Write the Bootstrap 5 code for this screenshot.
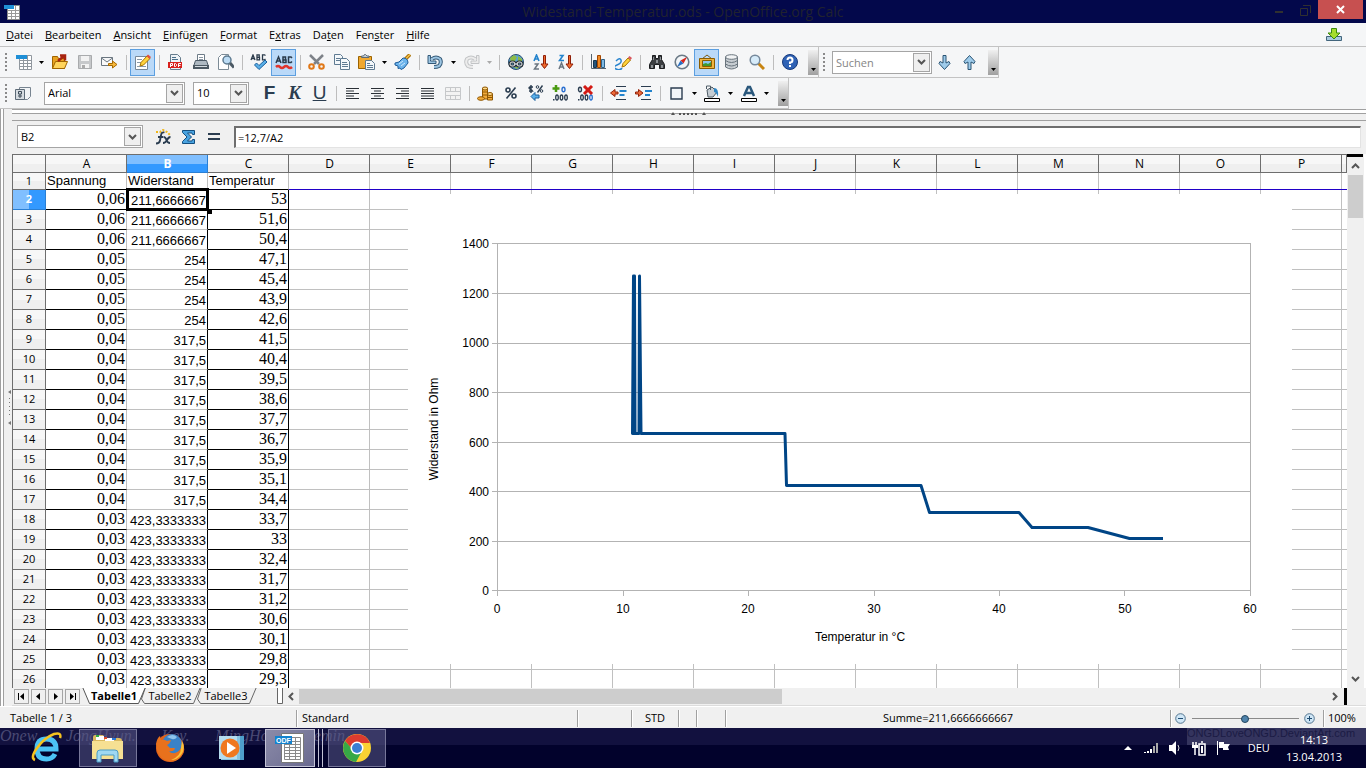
<!DOCTYPE html>
<html lang="de">
<head>
<meta charset="utf-8">
<meta name="viewport" content="width=device-width, initial-scale=1">
<title>Widestand-Temperatur.ods - OpenOffice.org Calc</title>
<link rel="stylesheet" href="https://cdn.jsdelivr.net/npm/bootstrap@5.3.0/dist/css/bootstrap.min.css">
<style>
:root{--ui:"Open Sans","Noto Sans",sans-serif;--face:#f0f0f0;--bar:#f5f6f7;--rule:#c3c3c3;--edge:#6e6e6e;--grid:#c0c0c0}
body{font:11px/16px var(--ui);color:#000;height:100vh;overflow:hidden;background:var(--face)}
button,select,input{font:inherit;color:inherit;border-radius:0}
button{border:0;background:none;padding:0}
.title-bar{height:23px;background:#03084b;color:#20222f}
.title-bar h1{font:14px/23px var(--ui);margin:0}
.win-btn{width:26px;height:20px;display:grid;place-items:center}
.win-close{width:45px;background:#c75050;height:19px;margin-right:3px}
.menu-bar{height:24px;background:var(--bar);border-bottom:1px solid var(--rule);padding-left:6px;gap:12px}
.menu-bar a{color:#000;text-decoration:none;line-height:23px}
.tool-row{height:31px;background:var(--bar)}
.tool-group{height:31px;border-bottom:1px solid var(--rule);border-right:1px solid var(--rule)}
.grip{width:2px;height:18px;margin:0 4px 0 5px;background:repeating-linear-gradient(#8a8a8a 0 2px,transparent 2px 4px)}
.grip-find{margin:0 7px 0 4px}
.ico{width:25px;height:27px;display:grid;place-items:center;flex:none}
.ico svg,.drop svg{display:block}
.ico.on{background:#bad9f8;border:1px solid #5c9fe0}
.drop{width:11px;height:27px;display:grid;place-items:center;flex:none}
.sep{width:8px;flex:none;display:grid;place-items:center}
.sep::before{content:"";width:1px;height:15px;background:#bdbdbd}
.more{width:10px;height:25px;background:linear-gradient(#f0f0f0,#a0a0a0);display:grid;place-items:end center;padding-bottom:4px;margin-left:6px}
.combo{position:relative;border:1px solid #a5a5a5;background:#fff;height:23px}
.combo select,.combo input{appearance:none;border:0;background:none;width:100%;height:21px;padding:0 20px 0 3px;outline:0;display:block}
.combo input::placeholder{color:#858585;opacity:1}
.combo .arrow{position:absolute;right:1px;top:1px;bottom:1px;width:17px;border:1px solid #a5a5a5;background:#efefef;display:grid;place-items:center;pointer-events:none}
.size-font{width:141px}.size-pt{width:56px}.size-find{width:100px}.size-name{width:126px}
.glyph{font:bold 19px/24px "Liberation Sans",sans-serif;color:#2b3d50}
.glyph-k{font-family:"Liberation Serif",serif;font-style:italic}
.side-split{width:12px;border-left:1px solid #a0a0a0;flex:none}
.side-split span{width:3px;height:100%;border-right:1px solid #a0a0a0;background:#fff}
.top-split{height:12px;border-top:1px solid #a0a0a0;border-bottom:1px solid #a0a0a0;box-shadow:inset 0 3px #fff,inset 0 4px #a0a0a0}
.formula-row{height:33px;padding:0 5px 1px 5px}
.formula-row input{border:1px solid #e3e3e3;border-top:2px solid #6e6e6e;border-left:2px solid #6e6e6e;height:22px;padding:0 2px;background:#fff;min-width:0}
.sheet-pane{border-top:1px solid var(--edge);border-left:1px solid var(--edge);background:#fff;min-width:0}
.cells{table-layout:fixed;border-collapse:separate;border-spacing:0;width:100%}
.cells .c-row{width:33px}.cells .c-col{width:81px}
.cells th{font-weight:400;text-align:center;padding:0;border:0 solid var(--edge);border-width:0 1px 1px 0;background:linear-gradient(#f7f7f7 50%,#efefef 50%)}
.cells thead th{height:18px;font-size:12px;line-height:16px;padding:1px 0 0 1px}
.cells td{padding:0 1px 0 1px;border:0 solid var(--grid);border-width:0 1px 1px 0;height:20px;text-align:right;white-space:nowrap;line-height:16px}
.cells tbody th{line-height:16px;height:20px}
.cells thead th.sel{background:linear-gradient(#80bfff 50%,#3399ff 50%);color:#fff;font-weight:700;border-color:#2a7fd4}
.cells tbody th.sel{background:linear-gradient(90deg,#80bfff 50%,#3399ff 50%);color:#fff;font-weight:700;border-color:#2a7fd4}
.cells td:nth-child(2),.cells td:nth-child(4){font:16px/16px "Liberation Serif",serif;border-bottom-color:#000}
.cells td:nth-child(3){font:13px/16px "Liberation Sans",sans-serif;vertical-align:bottom;border-right-color:#000}
.cells td:nth-child(4){border-right-color:#000}
.cells td:nth-child(5){background:repeating-linear-gradient(90deg,transparent 0 80px,var(--grid) 80px 81px);border-right:0}
.cells .head-row td{font:13px/16px "Liberation Sans",sans-serif;height:17px;text-align:left;vertical-align:middle;border-right-color:var(--grid)}
.cells .head-row td:nth-child(5){border-bottom-color:#2000c8}
.cells .head-row th{height:17px}
.cells td.cursor{position:relative}
.cursor::before{content:"";position:absolute;inset:-2px -2px -2px -1px;border:3px solid #000}
.cursor::after{content:"";position:absolute;right:-5px;bottom:-5px;width:5px;height:5px;background:#000}
.chart-object{position:absolute;left:395px;top:39px;width:884px;height:470px;background:#fff}
.chart-object text{font:12px "Liberation Sans",sans-serif}
.v-scroll{width:19px;border-right:2px solid #fff;background:var(--face);flex:none}
.v-scroll .cap{height:3px;background:#000;margin-right:1px}
.v-scroll button{height:18px;display:grid;place-items:center}
.v-scroll .thumb{height:43px;width:15px;background:#cdcdcd;margin-left:1px}
.tab-row{height:18px;border-bottom:1px solid #dcdcdc}
.nav-set{padding-left:2px}
.nav-btn{width:15px;height:15px;border:1px solid #a5a5a5;display:grid;place-items:center;margin-right:2px}
.sheet-tab{position:relative;height:16px;width:64px;margin-right:-8px}
.sheet-tab svg{position:absolute;inset:0}
.sheet-tab span{position:relative;line-height:16px}
.scroll-set{padding-left:27px}
.h-arrow{padding:0 5px}
.h-thumb{background:#cdcdcd;width:47%;height:15px}
.h-split{margin:0 19px 0 1px}
.status-row{height:22px;border-top:1px solid #fff;padding-top:2px}
.status-row>*{height:17px;line-height:16px}
.status-row>*+*{border-left:1px solid #a0a0a0;box-shadow:inset 1px 0 #fff}
.st-sheet{width:296px;padding-left:10px}.st-style{width:281px;padding-left:5px}.st-lang{width:54px}.st-mode{width:47px}.st-sel{width:18px}.st-mod{width:29px}.st-zoom{width:153px}.st-pct{width:43px;padding-left:4px}
.zoom-range{appearance:none;width:107px;height:14px;background:linear-gradient(#8a8a8a,#8a8a8a) center/100% 1px no-repeat;margin:0}
.zoom-range::-webkit-slider-thumb{appearance:none;width:8px;height:8px;border-radius:50%;background:#4f83ab;border:1px solid #23455f}
.task-bar{height:40px;color:#fff;background:linear-gradient(#12113f 0 17px,#02022c 17px)}
.task-bar .haze{position:absolute;top:0;height:17px;white-space:nowrap}
.haze-left{left:0;width:345px;font:italic 16px/16px "Liberation Serif",serif;color:#4a4a74}
.haze-right{right:0;width:179px;background:#34345e;font:11px/10px "Liberation Sans",sans-serif;color:#1b1b44}
.task-set{padding-left:17px;gap:4px}
.task-btn{width:58px;height:38px;display:grid;place-items:center}
.task-btn.open{background:rgba(90,90,135,.55);border:1px solid #77779a}
.task-btn.front{width:50px;background:linear-gradient(135deg,#8b8ba8,#6a6a90);border:1px solid #c3c3d6}
.stack{width:8px;height:38px;border-right:1px solid #c3c3d6;background:linear-gradient(90deg,transparent 3px,#c3c3d6 3px 4px,transparent 4px);margin:0 1px 0 -4px}
.tray-ico{width:24px;display:grid;place-items:center}
.tray-lang{margin:0 16px 0 12px}
.clock{line-height:17px}
</style>
</head>
<body class="d-flex flex-column">

<header>
  <div class="title-bar d-flex align-items-start">
    <div class="w-25 flex-fill"><svg class="d-block mt-1 ms-1" width="16" height="16" viewBox="0 0 16 16"><path fill="#fff" stroke="#8a8a8a" d="M3.500 1.500h12v14h-12z"/><path stroke="#999" d="M4 6.500h11M4 9.500h11M4 12.500h11M7.500 6v9M11.500 2v13"/><path fill="#1f8fd6" d="M0 1h10v4H0z"/></svg></div>
    <h1>Widestand-Temperatur.ods - OpenOffice.org Calc</h1>
    <div class="w-25 flex-fill d-flex justify-content-end">
      <button class="win-btn" aria-label="Minimieren"><svg width="8" height="12"><path fill="#303030" d="M0 7h8v2H0z"/></svg></button>
      <button class="win-btn" aria-label="Verkleinern"><svg width="11" height="11" fill="none" stroke="#303030"><path d="M.5 3.500h7v7h-7zM3 .5h7.500V8"/></svg></button>
      <button class="win-btn win-close" aria-label="Schließen"><svg width="9" height="9" stroke="#fff" stroke-width="2"><path d="M1 1l7 7M8 1L1 8"/></svg></button>
    </div>
  </div>
  <nav class="menu-bar d-flex">
    <a href="#"><u>D</u>atei</a><a href="#"><u>B</u>earbeiten</a><a href="#"><u>A</u>nsicht</a><a href="#"><u>E</u>infügen</a><a href="#"><u>F</u>ormat</a><a href="#">E<u>x</u>tras</a><a href="#">Da<u>t</u>en</a><a href="#">Fen<u>s</u>ter</a><a href="#"><u>H</u>ilfe</a>
    <button class="ms-auto me-4" aria-label="Aktualisierung"><svg class="d-block" width="16" height="16" viewBox="0 0 16 16"><path fill="#a9c9dd" stroke="#42657c" d="M.5 9.500h15v4H.5z"/><path fill="#a5dc2c" stroke="#3c8a0c" d="M5.500 1.500h5V6H14l-6 6-6-6h3.500z"/></svg></button>
  </nav>

  <div class="tool-row d-flex">
    <div class="tool-group d-flex align-items-center">
      <span class="grip"></span>
      <button class="ico" aria-label="Neu"><svg width="16" height="16"><path fill="#fff" stroke="#90979e" d="M3.500 1.500h12v14h-12zM3 6.500h12M3 9.500h12M3 12.500h12M7.500 2v13M11.500 2v13"/><path fill="#1f8fd6" d="M0 1h11v4H0z"/></svg></button>
      <button class="drop" aria-label="Mehr"><svg width="5" height="3"><path d="M0 0h5L2.500 3z"/></svg></button>
      <button class="ico" aria-label="Öffnen"><svg width="17" height="16"><path fill="#e8a220" stroke="#a06400" d="M1.500 14.500v-12h5l1 2h6v10z"/><path fill="#ffd45c" stroke="#a06400" d="M1.500 14.500l3-7h12l-3 7z"/><path fill="none" stroke="#a82310" stroke-width="2.500" d="M7 7l6-5M9 1.500h5v5"/></svg></button>
      <button class="ico" aria-label="Speichern"><svg width="14" height="14"><path fill="#c6c8ca" stroke="#a9abad" d="M.5.500h13v13H.500z"/><path fill="#f2f2f2" d="M3 1h8v5H3zM3 9h8v4H3z"/><path fill="#aaa" d="M4 10h3v3H4z"/></svg></button>
      <button class="ico" aria-label="E-Mail"><svg width="17" height="13"><path fill="#fafafa" stroke="#6a7680" d="M.5 1.500h11v8H.500zM.5 2l5.500 4L11.500 2"/><path fill="#f6b73a" stroke="#a86a00" d="M7.500 7.500h4V5l4.500 3.500L11.500 12v-2.500h-4z"/></svg></button>
      <span class="sep"></span>
      <button class="ico on" aria-label="Bearbeiten"><svg width="17" height="16"><path fill="#fff" stroke="#778899" d="M1.500 2.500h12v13h-12z"/><path stroke="#8899a8" d="M3 5.500h5M3 8.500h4M3 12.500h9"/><path fill="#ffd33d" stroke="#a87400" d="M6 12l1-3.500L13 2l3 2.500L9.500 11z"/><path fill="#e05040" d="M12.500 2L14 .5l3 2.500-1.500 2z"/></svg></button>
      <span class="sep"></span>
      <button class="ico" aria-label="PDF"><svg width="15" height="16"><path fill="#eef3f7" stroke="#667c8d" d="M2.500.5h7l3 3v12h-10z"/><path stroke="#4a6f8a" d="M4 3.500h4M4 5.500h6"/><path fill="#d8201c" d="M0 8h14v6H0z"/><path fill="none" stroke="#fff" d="M2.500 13V9.500h2v2h-2M6.500 9.500h1l1 1v1l-1 1h-1zM10.500 13V9.500h2.500M10.500 11.500h2"/></svg></button>
      <button class="ico" aria-label="Drucken"><svg width="16" height="16"><path fill="#fff" stroke="#6d7c88" d="M4.500 7V.5h7V7"/><path stroke="#8a97a3" d="M6 3.500h4M6 5.500h4"/><path fill="#aeb9c2" stroke="#4c5a66" d="M.5 12.500l2-6h11l2 6z"/><path fill="#4c5963" d="M0 11h16v4H0z"/><path fill="#d5dce1" d="M2 12h12v1H2z"/></svg></button>
      <button class="ico" aria-label="Seitenansicht"><svg width="16" height="16"><path fill="#fff" stroke="#7c8b96" d="M.5 3.500l3-3h7v15H.500z"/><circle cx="9" cy="6" r="4" fill="#bcdcf5" stroke="#5d7a90" stroke-width="1.500"/><path stroke="#4b5964" stroke-width="3" d="M12 9l4 4.500"/></svg></button>
      <span class="sep"></span>
      <button class="ico" aria-label="Rechtschreibung"><svg width="18" height="16"><g fill="none" stroke="#2a3a4a" stroke-width="1.300"><path d="M1 6l2-5 2 5M2 4.500h2.500M7 .8v5h2.500V3.300H7h2.200V.8zM15.500 1.500l-1-.7h-2v5h2l1-.7"/></g><path fill="#59b0e8" stroke="#1b5f9c" d="M4.500 11l2-2 2.500 2.500L15 6l2 2-8 7.500z"/></svg></button>
      <button class="ico on" aria-label="Automatische Rechtschreibprüfung"><svg width="18" height="16"><g fill="none" stroke="#2a3a4a" stroke-width="1.500"><path d="M1 9l2.500-6L6 9M2 7h3M8 3v5.500h3V6H8h2.500V3zM17 4l-1-1h-2.500v5.500H16l1-1"/></g><path fill="none" stroke="#e0342c" stroke-width="2.500" d="M1 13q2-2 4 0t4 0 4 0 4 0"/></svg></button>
      <span class="sep"></span>
      <button class="ico" aria-label="Ausschneiden"><svg width="17" height="16" fill="none"><path stroke="#7d8288" stroke-width="2.500" d="M2 1l9 9M15 1l-9 9"/><circle cx="3.500" cy="12.500" r="2.300" stroke="#e07818" stroke-width="2"/><circle cx="13.500" cy="12.500" r="2.300" stroke="#e07818" stroke-width="2"/></svg></button>
      <button class="ico" aria-label="Kopieren"><svg width="16" height="16" fill="#f4f8fb" stroke="#5f7b92"><path d="M.5.5h6l2 2v8h-8z"/><path d="M2 4.500h4M2 6.500h4"/><path d="M6.500 4.500h6l3 3v8h-9z"/><path d="M8 8.500h5M8 10.500h6M8 12.500h6"/></svg></button>
      <button class="ico" aria-label="Einfügen"><svg width="17" height="16"><path fill="#f0a830" stroke="#9b6300" d="M.5 2.500h13v12H.500z"/><path fill="#c3ccd3" stroke="#5d6b76" d="M3.500 3.500V2h2l1-1.500h1L9 2h2v1.500z"/><path fill="#f4f8fb" stroke="#5f7b92" d="M7.500 6.500h6l3 3v6h-9zM9 9.500h3M9 11.500h6M9 13.500h6"/></svg></button>
      <button class="drop" aria-label="Mehr"><svg width="5" height="3"><path d="M0 0h5L2.500 3z"/></svg></button>
      <button class="ico" aria-label="Format übertragen"><svg width="17" height="16"><path stroke="#a66c00" stroke-width="3.500" d="M11 5.500L16 .5"/><path stroke="#f6c14a" stroke-width="1.500" d="M11 5.500L16 .5"/><path fill="#6cb4ec" stroke="#1c5c9a" d="M1 9l4-1 4-4q5 0 5 5l-4 5-3 1.500L6 14l-2 .5V12l-3-1z"/><path stroke="#cfe8fb" d="M5 10l4-3M7 12l4-3"/></svg></button>
      <span class="sep"></span>
      <button class="ico" aria-label="Rückgängig"><svg width="17" height="16"><path fill="none" stroke="#355a78" stroke-width="4" d="M5 5q4-3 8 0 2 4-1 7-2 1-5 1"/><path fill="#9cc5e2" stroke="#355a78" d="M1 1.500h2.500V7H9v2.500H1z"/><path fill="none" stroke="#9cc5e2" stroke-width="2" d="M4 6l1-1q4-3 8 0 2 4-1 7-2 1-5 1"/></svg></button>
      <button class="drop" aria-label="Mehr"><svg width="5" height="3"><path d="M0 0h5L2.500 3z"/></svg></button>
      <button class="ico" aria-label="Wiederherstellen"><svg width="17" height="16"><path fill="none" stroke="#c2c4c6" stroke-width="4" d="M12 5q-4-3-8 0-2 4 1 7 2 1 5 1"/><path fill="#ececec" stroke="#c2c4c6" d="M16 1.500h-2.500V7H8v2.500h8z"/><path fill="none" stroke="#ececec" stroke-width="2" d="M13 6l-1-1q-4-3-8 0-2 4 1 7 2 1 5 1"/></svg></button>
      <button class="drop" aria-label="Mehr"><svg width="5" height="3"><path fill="#aaa" d="M0 0h5L2.500 3z"/></svg></button>
      <span class="sep"></span>
      <button class="ico" aria-label="Hyperlink"><svg width="16" height="16"><circle cx="8" cy="8" r="7.500" fill="#5ba4d6" stroke="#2a4e6d"/><path fill="#8dbb45" d="M2 4l4-3 3 2-2 4-4 1zM10 2l4 3v4l-4-2zM6 13h5l-2 2z"/><g fill="none" stroke="#2b3238" stroke-width="3"><rect x="2" y="8" width="5" height="4" rx="2"/><rect x="9" y="8" width="5" height="4" rx="2"/></g><g fill="none" stroke="#e8edf0"><rect x="2" y="8" width="5" height="4" rx="2"/><rect x="9" y="8" width="5" height="4" rx="2"/><path d="M6 10h4"/></g></svg></button>
      <button class="ico" aria-label="Aufsteigend sortieren"><svg width="16" height="16" fill="none"><path stroke="#2383cc" stroke-width="1.600" d="M1 7l2.500-6L6 7M2 5h3"/><path stroke="#6b7680" stroke-width="1.500" d="M1.500 10H5l-3.500 5H6"/><path fill="#f06a2c" stroke="#8e1f08" d="M10.500 1.500h2V10H15l-3.500 4.500L8 10h2.500z"/></svg></button>
      <button class="ico" aria-label="Absteigend sortieren"><svg width="16" height="16" fill="none"><path stroke="#2383cc" stroke-width="1.600" d="M1.500 1.500H5L1.500 6.500H6"/><path stroke="#6b7680" stroke-width="1.500" d="M1 15l2.500-6L6 15M2 13h3"/><path fill="#f06a2c" stroke="#8e1f08" d="M10.500 1.500h2V10H15l-3.500 4.500L8 10h2.500z"/></svg></button>
      <span class="sep"></span>
      <button class="ico" aria-label="Diagramm"><svg width="17" height="16"><path fill="#26567c" stroke="#173750" d="M3.500 6.500h3v7h-3z"/><path fill="#f08a24" stroke="#a34600" d="M7.500 1.500h3v12h-3z"/><path fill="#7fb9e2" stroke="#2d5f86" d="M11.500 5.500h3v8h-3z"/><path fill="none" stroke="#55636e" d="M1.500 0v14.500H16"/></svg></button>
      <button class="ico" aria-label="Zeichenfunktionen"><svg width="17" height="16"><path fill="none" stroke="#2b86cf" stroke-width="1.500" d="M1 7q4-4 5-1t-4 5-1 4 6-1"/><path fill="#ffd33d" stroke="#a87400" d="M7 13l1-3.500L13 4l2.500 2L10 12z"/><path fill="#d9575f" d="M13 3.500L14.500 2 17 4l-1.500 2z"/></svg></button>
      <span class="sep"></span>
      <button class="ico" aria-label="Suchen und Ersetzen"><svg width="16" height="16"><path fill="#3c3f42" stroke="#1b1d1f" d="M3.500 1.500h3v3h3v-3h3v4l3 5v4h-5v-4h-5v4h-5v-4l3-5z"/><path fill="#8d9296" d="M4 3h1v3H4zM11 3h1v3h-1zM2 11h2v3H2zM12 11h2v3h-2zM7 6h2v3H7z"/></svg></button>
      <button class="ico" aria-label="Navigator"><svg width="16" height="16"><circle cx="8" cy="8" r="6.800" fill="#f3f6f8" stroke="#6b7a86" stroke-width="1.600"/><path fill="#d9251c" d="M13 3L9.500 9.500l-3-3z"/><path fill="#2a6fc0" d="M3 13l3.500-6.500 3 3z"/></svg></button>
      <button class="ico on" aria-label="Gallery"><svg width="16" height="16"><path fill="none" stroke="#7a5a10" d="M3 5l5-4 5 4"/><path fill="#f0b440" stroke="#8b5d00" d="M.5 4.500h15v10H.500z"/><path fill="#8cc6f0" stroke="#8b5d00" d="M3.500 6.500h9v6h-9z"/><path fill="#3f9a30" d="M4 12v-2l3-1 2 1 3-2v4z"/></svg></button>
      <button class="ico" aria-label="Datenquellen"><svg width="13" height="16" fill="#c6ccd1" stroke="#69747d"><path d="M.5 3v10q6 4 12 0V3z"/><ellipse cx="6.500" cy="3" rx="6" ry="2.300" fill="#f1f3f4"/><path fill="none" d="M.5 6.500q6 4 12 0M.5 10q6 4 12 0"/></svg></button>
      <button class="ico" aria-label="Maßstab"><svg width="16" height="16"><path stroke="#c78412" stroke-width="3" d="M9.500 9.500L15 15"/><circle cx="6" cy="6" r="4.800" fill="#d6ebf9" stroke="#75889a" stroke-width="1.500"/></svg></button>
      <span class="sep"></span>
      <button class="ico" aria-label="Hilfe"><svg width="16" height="16"><circle cx="8" cy="8" r="7.500" fill="#2f62b5" stroke="#173a7c"/><path fill="none" stroke="#fff" stroke-width="2" d="M5.500 6q0-2.500 2.500-2.500T10.500 6 8 8.500V10M8 11v2"/></svg></button>
      <button class="more" aria-label="Weitere"><svg width="5" height="3"><path d="M0 0h5L2.500 3z"/></svg></button>
    </div>
    <div class="tool-group d-flex align-items-center">
      <span class="grip grip-find"></span>
      <label class="combo size-find"><input type="text" placeholder="Suchen" aria-label="Suchen"><span class="arrow"><svg width="9" height="6" fill="none" stroke="#555" stroke-width="2"><path d="M1 1l3.500 3.500L8 1"/></svg></span></label>
      <button class="ico" aria-label="Weitersuchen"><svg width="13" height="15"><path fill="#9ecbea" stroke="#2b5575" d="M5 .5h3V8l3-1.500 1 2-5.500 6L1 8.500l1-2L5 8z"/></svg></button>
      <button class="ico" aria-label="Rückwärts suchen"><svg width="13" height="15"><path fill="#9ecbea" stroke="#2b5575" d="M5 14.500h3V7l3 1.500 1-2L6.500.5 1 6.500l1 2L5 7z"/></svg></button>
      <button class="more" aria-label="Weitere"><svg width="5" height="3"><path d="M0 0h5L2.500 3z"/></svg></button>
    </div>
  </div>

  <div class="tool-row d-flex">
    <div class="tool-group d-flex align-items-center">
      <span class="grip"></span>
      <button class="ico" aria-label="Formatvorlagen"><svg width="17" height="15"><path fill="#f1f4f6" stroke="#788591" d="M4.500 1.500h11v9l-3 3h-8z"/><path fill="#d6dce1" stroke="#5d6b77" d="M.5 3.500h9v10H.500z"/><path fill="none" stroke="#3f4d59" d="M3.500 8V5.500h3V8h-3M5 8v4M3 10h4"/></svg></button>
      <label class="combo size-font ms-2"><select aria-label="Schriftart"><option>Arial</option></select><span class="arrow"><svg width="9" height="6" fill="none" stroke="#555" stroke-width="2"><path d="M1 1l3.500 3.500L8 1"/></svg></span></label>
      <label class="combo size-pt ms-2"><select aria-label="Schriftgröße"><option>10</option></select><span class="arrow"><svg width="9" height="6" fill="none" stroke="#555" stroke-width="2"><path d="M1 1l3.500 3.500L8 1"/></svg></span></label>
      <button class="ico glyph ms-2">F</button>
      <button class="ico glyph glyph-k">K</button>
      <button class="ico glyph fw-normal text-decoration-underline">U</button>
      <span class="sep"></span>
      <button class="ico" aria-label="Linksbündig"><svg width="13" height="11" stroke="#2a3036"><path d="M0 .5h13M0 3h8M0 5.500h13M0 8h8M0 10.500h13"/></svg></button>
      <button class="ico" aria-label="Zentriert"><svg width="13" height="11" stroke="#2a3036"><path d="M0 .5h13M3 3h7M0 5.500h13M3 8h7M0 10.500h13"/></svg></button>
      <button class="ico" aria-label="Rechtsbündig"><svg width="13" height="11" stroke="#2a3036"><path d="M0 .5h13M5 3h8M0 5.500h13M5 8h8M0 10.500h13"/></svg></button>
      <button class="ico" aria-label="Blocksatz"><svg width="13" height="11" stroke="#2a3036"><path d="M0 .5h13M0 3h13M0 5.500h13M0 8h13M0 10.500h13"/></svg></button>
      <button class="ico" aria-label="Zellen verbinden"><svg width="16" height="13" fill="#f3f3f3" stroke="#c6c8ca"><path d="M.5.5h15v12H.500zM0 4.500h16M0 8.500h16M5.500 0v4M10.500 0v4M5.500 9v4M10.500 9v4"/></svg></button>
      <span class="sep"></span>
      <button class="ico" aria-label="Währung"><svg width="17" height="15" fill="#f2ab3c" stroke="#8f5600"><path d="M5.500 2v11h5V2z"/><ellipse cx="8" cy="2.500" rx="2.500" ry="1.500" fill="#ffdc8c"/><path d="M10.500 8v6h5V8z"/><ellipse cx="13" cy="8" rx="2.500" ry="1.500" fill="#ffdc8c"/><path fill="none" d="M5.500 6h5M5.500 9h5M11 11.500h4.500"/><ellipse cx="4" cy="12.500" rx="3.500" ry="1.800"/></svg></button>
      <button class="ico" aria-label="Prozent"><svg width="12" height="12" fill="none" stroke="#2b3d50" stroke-width="1.600"><circle cx="3" cy="3" r="2"/><circle cx="9" cy="9" r="2"/><path d="M10.500.5l-9 11"/></svg></button>
      <button class="ico" aria-label="Standardformat"><svg width="17" height="16" fill="none" stroke="#2b3d50"><path stroke-width="1.400" d="M6 2H3q-2 1 0 2t2.500 2H2M4 0v8M15.500.5l-5 7"/><circle cx="10.500" cy="2" r="1.300"/><circle cx="14.500" cy="6" r="1.300"/><path fill="#5ab0ea" stroke="#1b5f9c" d="M4 11.500l4-4v2.500h4v3H8v2.500z"/></svg></button>
      <button class="ico" aria-label="Dezimalstelle hinzufügen"><svg width="17" height="16" fill="none"><path stroke="#4a9a10" stroke-width="2.500" d="M4 0v7M.5 3.500h7"/><ellipse cx="11.500" cy="4.500" rx="1.500" ry="2.300" stroke="#2a6fd0" stroke-width="1.400"/><g stroke="#2b3d50" stroke-width="1.300"><ellipse cx="5" cy="12.500" rx="1.300" ry="2.500"/><ellipse cx="9.500" cy="12.500" rx="1.300" ry="2.500"/><ellipse cx="14" cy="12.500" rx="1.300" ry="2.500"/></g><path fill="#2b3d50" d="M1 14h1.500v1.500H1z"/></svg></button>
      <button class="ico" aria-label="Dezimalstelle löschen"><svg width="17" height="16" fill="none"><ellipse cx="3" cy="4.500" rx="1.500" ry="2.300" stroke="#2b3d50" stroke-width="1.400"/><g stroke="#2b3d50" stroke-width="1.300"><ellipse cx="5" cy="12.500" rx="1.300" ry="2.500"/><ellipse cx="9.500" cy="12.500" rx="1.300" ry="2.500"/><ellipse cx="14" cy="12.500" rx="1.300" ry="2.500" stroke="#2a6fd0"/></g><path fill="#2b3d50" d="M1 14h1.500v1.500H1z"/><path stroke="#d31a14" stroke-width="3" d="M7 1l8 8M15 1L7 9"/></svg></button>
      <span class="sep"></span>
      <button class="ico" aria-label="Einzug vermindern"><svg width="17" height="14" fill="none"><path fill="#ee6a3a" stroke="#93230a" d="M.5 7L5 3.500V6h3v2H5v2.500z"/><path stroke="#2b3d50" d="M6 .5h10M6 13.500h10"/><path stroke="#2383cc" stroke-width="2" d="M9.500 5h7M9.500 9h5"/></svg></button>
      <button class="ico" aria-label="Einzug erhöhen"><svg width="17" height="14" fill="none"><path fill="#ee6a3a" stroke="#93230a" d="M8 7L3.500 3.500V6h-3v2h3v2.500z"/><path stroke="#2b3d50" d="M6 .5h10M6 13.500h10"/><path stroke="#2383cc" stroke-width="2" d="M10 5h7M10 9h5"/></svg></button>
      <span class="sep"></span>
      <button class="ico" aria-label="Umrandung"><svg width="13" height="13"><path fill="#f2f5f8" stroke="#2b3d50" stroke-width="1.400" d="M1 1h11v11H1z"/></svg></button>
      <button class="drop" aria-label="Mehr"><svg width="5" height="3"><path d="M0 0h5L2.500 3z"/></svg></button>
      <button class="ico" aria-label="Hintergrundfarbe"><svg width="17" height="17"><path fill="#c4ccd2" stroke="#4f5c67" d="M3 5l5-3 5 5-4 5H4z"/><path fill="none" stroke="#4f5c67" d="M2.500 4V1h4v4"/><path fill="#2f86c4" d="M10 3q5 0 4 9-2-5-4-5z"/><path fill="#fff" stroke="#000" d="M.5 13.500h15v3H.500z"/></svg></button>
      <button class="drop" aria-label="Mehr"><svg width="5" height="3"><path d="M0 0h5L2.500 3z"/></svg></button>
      <button class="ico" aria-label="Zeichenfarbe"><svg width="16" height="17"><path fill="none" stroke="#2a587c" stroke-width="2.500" d="M3 11l4-9h2l4 9M5 8h6"/><path fill="#fff" stroke="#000" d="M.5 13.500h15v3H.500z"/></svg></button>
      <button class="drop" aria-label="Mehr"><svg width="5" height="3"><path d="M0 0h5L2.500 3z"/></svg></button>
      <button class="more" aria-label="Weitere"><svg width="5" height="3"><path d="M0 0h5L2.500 3z"/></svg></button>
    </div>
  </div>
</header>

<main class="flex-fill d-flex overflow-hidden">
  <div class="side-split position-relative d-flex align-items-center">
    <span></span>
    <svg class="ms-1" width="4" height="36" fill="#777"><path d="M0 2l3-2v4zM0 33l3-2v4zM1 8h1v1H1zM1 12h1v1H1zM1 16h1v1H1zM1 20h1v1H1zM1 24h1v1H1z"/></svg>
  </div>
  <div class="flex-fill d-flex flex-column overflow-hidden">
    <div class="top-split d-flex justify-content-center align-items-end pb-1"><svg width="36" height="4" fill="#555"><path d="M0 3l2-3 2 3zM31 3l2-3 2 3zM8 1h2v2H8zM12 1h2v2h-2zM16 1h2v2h-2zM20 1h2v2h-2zM24 1h2v2h-2z"/></svg></div>
    <div class="formula-row d-flex align-items-center">
      <label class="combo size-name me-2"><select aria-label="Namensfeld"><option>B2</option></select><span class="arrow"><svg width="9" height="6" fill="none" stroke="#555" stroke-width="2"><path d="M1 1l3.500 3.500L8 1"/></svg></span></label>
      <button class="ico" aria-label="Funktions-Assistent"><svg width="17" height="16" fill="none"><path stroke="#f0b818" stroke-width="2" stroke-dasharray="2 1.500" d="M1 3h4l3-2 4 2 3 3"/><path stroke="#2b3d50" stroke-width="1.800" d="M9.500 3.500q-3-1-3.500 3l-1 5q-.5 3-4 3M3 8h5M8.500 8q2 0 3 3t3.500 3M15.500 8q-2 0-3.500 3t-4 3"/></svg></button>
      <button class="ico" aria-label="Summe"><svg width="14" height="14"><path fill="#49a3e0" stroke="#134f80" d="M.5.500h12v4h-2L10 3H5.500l4 4-4 4H10l.5-1.500h2v4H.500v-2L5 7 .5 2.500z"/></svg></button>
      <button class="ico" aria-label="Funktion"><svg width="12" height="7"><path fill="#2b3d50" d="M0 0h12v2H0zM0 5h12v2H0z"/></svg></button>
      <input class="flex-fill ms-2" type="text" value="=12,7/A2" aria-label="Eingabezeile">
    </div>
    <div class="flex-fill d-flex overflow-hidden">
      <div class="sheet-pane flex-fill position-relative overflow-hidden">
        <table class="cells">
          <colgroup><col class="c-row"><col class="c-col" span="15"><col class="c-col"><col></colgroup>
          <thead><tr><th></th><th>A</th><th class="sel">B</th><th>C</th><th>D</th><th>E</th><th>F</th><th>G</th><th>H</th><th>I</th><th>J</th><th>K</th><th>L</th><th>M</th><th>N</th><th>O</th><th>P</th><th></th></tr></thead>
          <tbody>
          <tr class="head-row"><th>1</th><td>Spannung</td><td>Widerstand</td><td>Temperatur</td><td colspan="14"></td></tr>
          <tr><th class="sel">2</th><td>0,06</td><td class="cursor">211,6666667</td><td>53</td><td colspan="14"></td></tr>
          <tr><th>3</th><td>0,06</td><td>211,6666667</td><td>51,6</td><td colspan="14"></td></tr>
          <tr><th>4</th><td>0,06</td><td>211,6666667</td><td>50,4</td><td colspan="14"></td></tr>
          <tr><th>5</th><td>0,05</td><td>254</td><td>47,1</td><td colspan="14"></td></tr>
          <tr><th>6</th><td>0,05</td><td>254</td><td>45,4</td><td colspan="14"></td></tr>
          <tr><th>7</th><td>0,05</td><td>254</td><td>43,9</td><td colspan="14"></td></tr>
          <tr><th>8</th><td>0,05</td><td>254</td><td>42,6</td><td colspan="14"></td></tr>
          <tr><th>9</th><td>0,04</td><td>317,5</td><td>41,5</td><td colspan="14"></td></tr>
          <tr><th>10</th><td>0,04</td><td>317,5</td><td>40,4</td><td colspan="14"></td></tr>
          <tr><th>11</th><td>0,04</td><td>317,5</td><td>39,5</td><td colspan="14"></td></tr>
          <tr><th>12</th><td>0,04</td><td>317,5</td><td>38,6</td><td colspan="14"></td></tr>
          <tr><th>13</th><td>0,04</td><td>317,5</td><td>37,7</td><td colspan="14"></td></tr>
          <tr><th>14</th><td>0,04</td><td>317,5</td><td>36,7</td><td colspan="14"></td></tr>
          <tr><th>15</th><td>0,04</td><td>317,5</td><td>35,9</td><td colspan="14"></td></tr>
          <tr><th>16</th><td>0,04</td><td>317,5</td><td>35,1</td><td colspan="14"></td></tr>
          <tr><th>17</th><td>0,04</td><td>317,5</td><td>34,4</td><td colspan="14"></td></tr>
          <tr><th>18</th><td>0,03</td><td>423,3333333</td><td>33,7</td><td colspan="14"></td></tr>
          <tr><th>19</th><td>0,03</td><td>423,3333333</td><td>33</td><td colspan="14"></td></tr>
          <tr><th>20</th><td>0,03</td><td>423,3333333</td><td>32,4</td><td colspan="14"></td></tr>
          <tr><th>21</th><td>0,03</td><td>423,3333333</td><td>31,7</td><td colspan="14"></td></tr>
          <tr><th>22</th><td>0,03</td><td>423,3333333</td><td>31,2</td><td colspan="14"></td></tr>
          <tr><th>23</th><td>0,03</td><td>423,3333333</td><td>30,6</td><td colspan="14"></td></tr>
          <tr><th>24</th><td>0,03</td><td>423,3333333</td><td>30,1</td><td colspan="14"></td></tr>
          <tr><th>25</th><td>0,03</td><td>423,3333333</td><td>29,8</td><td colspan="14"></td></tr>
          <tr><th>26</th><td>0,03</td><td>423,3333333</td><td>29,3</td><td colspan="14"></td></tr>
          </tbody>
        </table>
        <svg class="chart-object" viewBox="0 0 884 470" role="img" aria-label="Widerstand über Temperatur">
          <path fill="none" stroke="#b3b3b3" shape-rendering="crispEdges" d="M84 49.500h758.500V397M84 99.500h758M84 149.500h758M84 198.500h758M84 248.500h758M84 297.500h758M84 347.500h758M84 396.500h758M89.500 49v353M215.500 397v5M340.500 397v5M466.500 397v5M591.500 397v5M716.500 397v5M842.500 397v5"/>
          <path fill="none" stroke="#004586" stroke-width="3" stroke-linejoin="round" d="M755 344.500h-33.500L680 333.500h-56L611 318.500h-89.500L513 291.500H378.500L377 239.500H233L231.500 82L231 239.500H227L226.500 82h-1L224.500 239.500h4"/>
          <g text-anchor="end"><text x="81" y="54">1400</text><text x="81" y="104">1200</text><text x="81" y="153">1000</text><text x="81" y="203">800</text><text x="81" y="253">600</text><text x="81" y="302">400</text><text x="81" y="352">200</text><text x="81" y="401">0</text></g>
          <g text-anchor="middle"><text x="89" y="419">0</text><text x="215" y="419">10</text><text x="340" y="419">20</text><text x="466" y="419">30</text><text x="591" y="419">40</text><text x="717" y="419">50</text><text x="842" y="419">60</text><text x="452" y="447">Temperatur in °C</text><text transform="translate(30 235) rotate(-90)">Widerstand in Ohm</text></g>
        </svg>
      </div>
      <div class="v-scroll d-flex flex-column align-items-stretch">
        <div class="cap"></div>
        <button aria-label="Nach oben"><svg width="9" height="6" fill="none" stroke="#555" stroke-width="2"><path d="M1 5l3.500-3.500L8 5"/></svg></button>
        <div class="thumb"></div>
        <button class="mt-auto" aria-label="Nach unten"><svg width="9" height="6" fill="none" stroke="#555" stroke-width="2"><path d="M1 1l3.500 3.500L8 1"/></svg></button>
      </div>
    </div>
    <div class="tab-row d-flex">
      <div class="nav-set d-flex align-items-center">
        <button class="nav-btn" aria-label="Erste"><svg width="7" height="7"><path d="M0 0h1v7H0zM6 0v7L2 3.500z"/></svg></button>
        <button class="nav-btn" aria-label="Vorige"><svg width="5" height="7"><path d="M4 0v7L0 3.500z"/></svg></button>
        <button class="nav-btn" aria-label="Nächste"><svg width="5" height="7"><path d="M1 0v7l4-3.500z"/></svg></button>
        <button class="nav-btn" aria-label="Letzte"><svg width="7" height="7"><path d="M6 0h1v7H6zM1 0v7l4-3.500z"/></svg></button>
      </div>
      <button class="sheet-tab fw-bold z-1"><svg width="64" height="16"><path fill="#fff" stroke="#555" d="M.5-1l7 16.500h49L63.500-1z"/></svg><span>Tabelle1</span></button>
      <button class="sheet-tab"><svg width="64" height="16"><path fill="#f0f0f0" stroke="#666" d="M7.500-1L3.500 11l3 4.500h49L62.500-1z"/></svg><span>Tabelle2</span></button>
      <button class="sheet-tab"><svg width="64" height="16"><path fill="#f0f0f0" stroke="#666" d="M7.500-1L3.500 11l3 4.500h49L62.500-1z"/></svg><span>Tabelle3</span></button>
      <div class="scroll-set flex-fill d-flex align-items-center">
        <svg width="6" height="17"><path fill="#fff" stroke="#666" d="M.5-.5h5v16h-5z"/></svg>
        <button class="h-arrow" aria-label="Nach links"><svg class="d-block" width="6" height="9" fill="none" stroke="#555" stroke-width="2"><path d="M5 1L1.500 4.500 5 8"/></svg></button>
        <div class="flex-fill"><div class="h-thumb"></div></div>
        <button class="h-arrow" aria-label="Nach rechts"><svg class="d-block" width="6" height="9" fill="none" stroke="#555" stroke-width="2"><path d="M1 1l3.500 3.500L1 8"/></svg></button>
        <svg class="h-split" width="3" height="17"><path d="M0 0h3v17H0z"/></svg>
      </div>
    </div>
  </div>
</main>

<footer>
  <div class="status-row d-flex align-items-center">
    <div class="st-sheet">Tabelle 1 / 3</div>
    <div class="st-style">Standard</div>
    <div class="st-lang"></div>
    <div class="st-mode text-center">STD</div>
    <div class="st-sel"></div>
    <div class="st-mod"></div>
    <div class="flex-fill text-center">Summe=211,6666666667</div>
    <div class="st-zoom d-flex align-items-center justify-content-between px-1">
      <button aria-label="Verkleinern"><svg class="d-block" width="11" height="11"><circle cx="5.500" cy="5.500" r="4.800" fill="#cfe6f6" stroke="#54758f"/><path stroke="#1c4a70" d="M3 5.500h5"/></svg></button>
      <input class="zoom-range" type="range" aria-label="Maßstab">
      <button class="me-1" aria-label="Vergrößern"><svg class="d-block" width="11" height="11"><circle cx="5.500" cy="5.500" r="4.800" fill="#cfe6f6" stroke="#54758f"/><path stroke="#1c4a70" d="M3 5.500h5M5.500 3v5"/></svg></button>
    </div>
    <div class="st-pct">100%</div>
  </div>

  <div class="task-bar position-relative d-flex align-items-center">
    <div class="haze haze-left d-flex justify-content-between" aria-hidden="true"><span>Onew.</span><span>JongHyun.</span><span>Key.</span><span>MingHo.</span><span>Taemin</span></div>
    <div class="haze haze-right" aria-hidden="true">ONGDLoveONGD.DeviantArt.com</div>
    <div class="task-set d-flex align-items-center position-relative">
      <button class="task-btn" aria-label="Internet Explorer"><svg width="32" height="32" viewBox="0 0 32 32"><path fill="none" stroke="#4cc3f5" stroke-width="5" d="M8 17h18q0-10-9.500-10T7 17t9.500 10q6 0 8.500-5"/><path fill="none" stroke="#f5c320" stroke-width="2.500" d="M5 28q-5-2 2-12T24 2q8-2 6 4"/></svg></button>
      <button class="task-btn open" aria-label="Explorer"><svg width="34" height="32" viewBox="0 0 34 32"><path fill="#d9b860" d="M2 5q0-2 2-2h8l2 3h14q3 0 3 3v17H2z"/><path fill="#fff" d="M5 4h8v4H5zM14 6h9v4h-9z"/><path fill="#2fae4a" d="M5 3h3v2H5z"/><path fill="#d84a2c" d="M13 5h3v2h-3z"/><path fill="#2c7ad8" d="M21 6h4v2h-4z"/><path fill="#f6e093" d="M1 9h31v18H1z"/><path fill="#9fd8f2" stroke="#4a9cc6" d="M6 30V21q0-3 3-3h15q3 0 3 3v9h-4v-7H10v7z"/></svg></button>
      <button class="task-btn" aria-label="Firefox"><svg width="32" height="32" viewBox="0 0 32 32"><circle cx="16" cy="16" r="14" fill="#e2631a"/><circle cx="18" cy="12" r="10" fill="#3a82c8"/><path fill="#8fc4ec" d="M13 5q6-4 10 0-2 3-5 2t-5-2z"/><path fill="#e8711c" d="M2 12Q3 6 6 4l1 4q3-1 6 1l4-1q-1 4-4 5l3 3h5q-1 4-6 3 2 3 6 2 7-2 7-10 5 8-1 14-7 7-16 3Q3 24 2 12z"/><path fill="#fbc23a" d="M28 9q4 7-1 14-4 5-10 5 10-4 10-12z"/></svg></button>
      <button class="task-btn" aria-label="Media Player"><svg width="28" height="28" viewBox="0 0 28 28"><path fill="#4f9fcb" d="M6 2h20v24H6z"/><path fill="#86c3e2" d="M3 2h19v24H3z"/><path fill="#b5dcef" d="M1 2h18v23H1z"/><circle cx="12" cy="14" r="9.500" fill="#f07820"/><path fill="#fff" d="M9 8l9 6-9 6z"/></svg></button>
      <button class="task-btn front" aria-label="OpenOffice Calc"><svg width="34" height="32" viewBox="0 0 34 32"><path fill="#fff" stroke="#777" d="M8.500 1.500h22v29h-22z"/><path fill="none" stroke="#8a8a8a" d="M11.500 5.500h16v22h-16zM11 9.500h16M11 12.500h16M11 15.500h16M11 18.500h16M11 21.500h16M11 24.500h16M16.500 5v22M22.500 5v22"/><path fill="#1283cf" d="M2 4h17v8H2z"/><text x="3" y="11" font-family="Liberation Sans" font-size="7" font-weight="700" fill="#fff">ODF</text></svg></button>
      <span class="stack"></span>
      <button class="task-btn open" aria-label="Chrome"><svg width="30" height="30" viewBox="0 0 30 30"><circle cx="15" cy="15" r="14" fill="#f9d232"/><path fill="#db3b2f" d="M3 8a14 14 0 0 1 25 2H15l-5 6z"/><path fill="#36a846" d="M3 8a14 14 0 0 0 11 21l6-11-9-1z"/><circle cx="15" cy="15" r="6.500" fill="#fff"/><circle cx="15" cy="15" r="5" fill="#3b7fd4"/></svg></button>
    </div>
    <div class="d-flex align-items-center ms-auto position-relative pe-4">
      <span class="tray-ico"><svg width="8" height="4"><path fill="#fff" d="M0 4l4-4 4 4z"/></svg></span>
      <span class="tray-ico"><svg width="16" height="12"><path fill="#fff" d="M0 10h2v1H0zM3 9h2v2H3zM6 7h2v4H6z"/><path fill="#aaa" d="M9 4h2v7H9zM12 1h2v10h-2z"/></svg></span>
      <span class="tray-ico"><svg width="14" height="14"><path fill="#fff" d="M0 4h3l4-4v14l-4-4H0z"/><path fill="none" stroke="#ddd" d="M9 4q2 3 0 6"/></svg></span>
      <span class="tray-ico"><svg width="16" height="15"><path fill="none" stroke="#fff" stroke-width="1.500" d="M7 3h6v11H7zM9 1h2M3 6v8M1 1v3M4 1v3"/><path fill="#fff" d="M0 4h6v3H0zM9 5h2v7H9z"/></svg></span>
      <span class="tray-ico"><svg width="16" height="14"><path fill="#fff" d="M1 0h1v14H1zM3 1h5v2h6l-2 3 1 3H7V7H3z"/></svg></span>
      <button class="tray-lang">DEU</button>
      <div class="clock text-center">14:13<br>13.04.2013</div>
    </div>
  </div>
</footer>
<script src="https://cdn.jsdelivr.net/npm/bootstrap@5.3.0/dist/js/bootstrap.bundle.min.js"></script>
</body>
</html>
